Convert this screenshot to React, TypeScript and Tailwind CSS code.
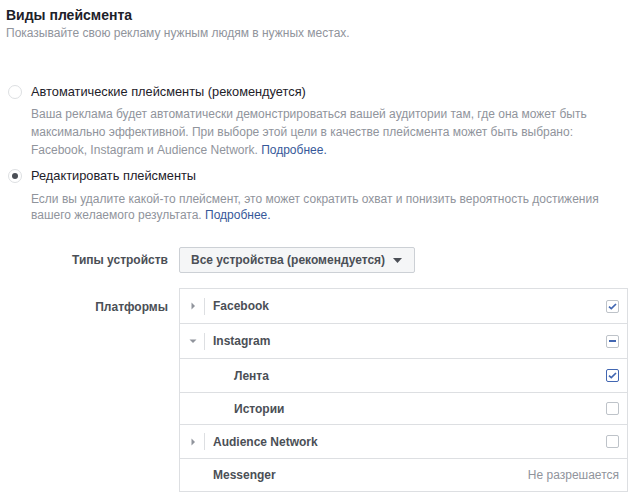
import React from "react";

const Arrow = ({ down }: { down?: boolean }) => (
  <svg width="8" height="8" viewBox="0 0 8 8" className="shrink-0">
    {down ? <path d="M0.5 2.5 L7.5 2.5 L4 6 Z" fill="#90949c" /> : <path d="M2.5 0.5 L2.5 7.5 L6 4 Z" fill="#90949c" />}
  </svg>
);

const Checkbox = ({ state, active }: { state: "checked" | "mixed" | "empty"; active?: boolean }) => (
  <div className={`w-[13px] h-[13px] rounded-[2px] border bg-white flex items-center justify-center ${active ? "border-[#4267b2]" : "border-[#bec3c9]"}`}>
    {state === "checked" && (
      <svg width="9" height="7" viewBox="0 0 9 7">
        <path d="M1 3.6 L3.3 5.6 L8 1" stroke="#4267b2" strokeWidth="1.7" fill="none" />
      </svg>
    )}
    {state === "mixed" && <div className="w-[7px] h-[2px] bg-[#4267b2]" />}
  </div>
);

type Row = {
  label: string;
  arrow?: "right" | "down";
  indent?: boolean;
  plain?: boolean;
  right: React.ReactNode;
  h: string;
};

export default function App() {
  const rows: Row[] = [
    { label: "Facebook", arrow: "right", right: <Checkbox state="checked" />, h: "h-[35px]" },
    { label: "Instagram", arrow: "down", right: <Checkbox state="mixed" />, h: "h-[35px]" },
    { label: "Лента", indent: true, right: <Checkbox state="checked" active />, h: "h-[34px]" },
    { label: "Истории", indent: true, right: <Checkbox state="empty" />, h: "h-[32px]" },
    { label: "Audience Network", arrow: "right", right: <Checkbox state="empty" />, h: "h-[34px]" },
    {
      label: "Messenger",
      plain: true,
      right: <span className="text-[12px] text-[#90949c] font-normal">Не разрешается</span>,
      h: "h-[32px]",
    },
  ];

  return (
    <div className="w-[632px] h-[493px] bg-white overflow-hidden text-[12px] text-[#1d2129]" style={{ fontFamily: '"Liberation Sans", Arial, sans-serif' }}>
      <div className="pl-[6px] pt-[6px]">
        <div className="text-[14px] font-bold leading-[18px]">Виды плейсмента</div>
        <div className="text-[12px] text-[#90949c] leading-[16px] mt-[1px]">Показывайте свою рекламу нужным людям в нужных местах.</div>
      </div>

      <div className="pl-[8px] mt-[43px]">
        <div className="flex items-center h-[16px]">
          <div className="w-[14px] h-[14px] rounded-full border border-[#dddfe2] bg-white" />
          <span className="ml-[9px] text-[12.8px] text-[#1d2129]">Автоматические плейсменты (рекомендуется)</span>
        </div>
        <div className="ml-[23px] mt-[5px] text-[#90949c] leading-[18px] w-[590px]">
          Ваша реклама будет автоматически демонстрироваться вашей аудитории там, где она может быть максимально эффективной. При выборе этой цели в качестве плейсмента может быть выбрано: Facebook, Instagram и Audience Network. <span className="text-[#365899]">Подробнее.</span>
        </div>

        <div className="flex items-center h-[16px] mt-[9px]">
          <div className="w-[14px] h-[14px] rounded-full border border-[#dddfe2] bg-white flex items-center justify-center">
            <div className="w-[6px] h-[6px] rounded-full bg-[#4b4f56]" />
          </div>
          <span className="ml-[9px] text-[12.8px] text-[#1d2129]">Редактировать плейсменты</span>
        </div>
        <div className="ml-[23px] mt-[7px] text-[#90949c] leading-[16px] w-[590px]">
          Если вы удалите какой-то плейсмент, это может сократить охват и понизить вероятность достижения вашего желаемого результата. <span className="text-[#365899]">Подробнее.</span>
        </div>
      </div>

      <div className="flex items-center mt-[24px]">
        <div className="w-[168px] text-right font-bold text-[#4b4f56]">Типы устройств</div>
        <div className="ml-[11px] w-[236px] h-[26px] border border-[#ccd0d5] rounded-[2px] bg-[#f5f6f7] flex items-center pl-[11px] font-bold text-[#4b4f56]">
          Все устройства (рекомендуется)
          <svg width="9" height="5" viewBox="0 0 9 5" className="ml-[8px]">
            <path d="M0 0 L9 0 L4.5 5 Z" fill="#4b4f56" />
          </svg>
        </div>
      </div>

      <div className="flex mt-[15px]">
        <div className="w-[168px] text-right font-bold text-[#4b4f56] pt-[10px]">Платформы</div>
        <div className="ml-[11px] w-[449px] border border-[#dddfe2]">
          {rows.map((r, i) => (
            <div key={i} className={`flex items-center ${r.h} ${i < rows.length - 1 ? "border-b border-[#dddfe2]" : ""} pr-[8px]`}>
              {r.arrow ? (
                <div className="flex items-center">
                  <div className="w-[24px] flex justify-center pl-[2px]">
                    <Arrow down={r.arrow === "down"} />
                  </div>
                  <div className="w-px h-[17px] bg-[#dddfe2]" />
                  <span className="ml-[8px] font-bold text-[#4b4f56]">{r.label}</span>
                </div>
              ) : r.indent ? (
                <span className="ml-[54px] font-bold text-[#4b4f56]">{r.label}</span>
              ) : (
                <span className="ml-[33px] font-bold text-[#4b4f56]">{r.label}</span>
              )}
              <div className="ml-auto flex items-center">{r.right}</div>
            </div>
          ))}
        </div>
      </div>
    </div>
  );
}
